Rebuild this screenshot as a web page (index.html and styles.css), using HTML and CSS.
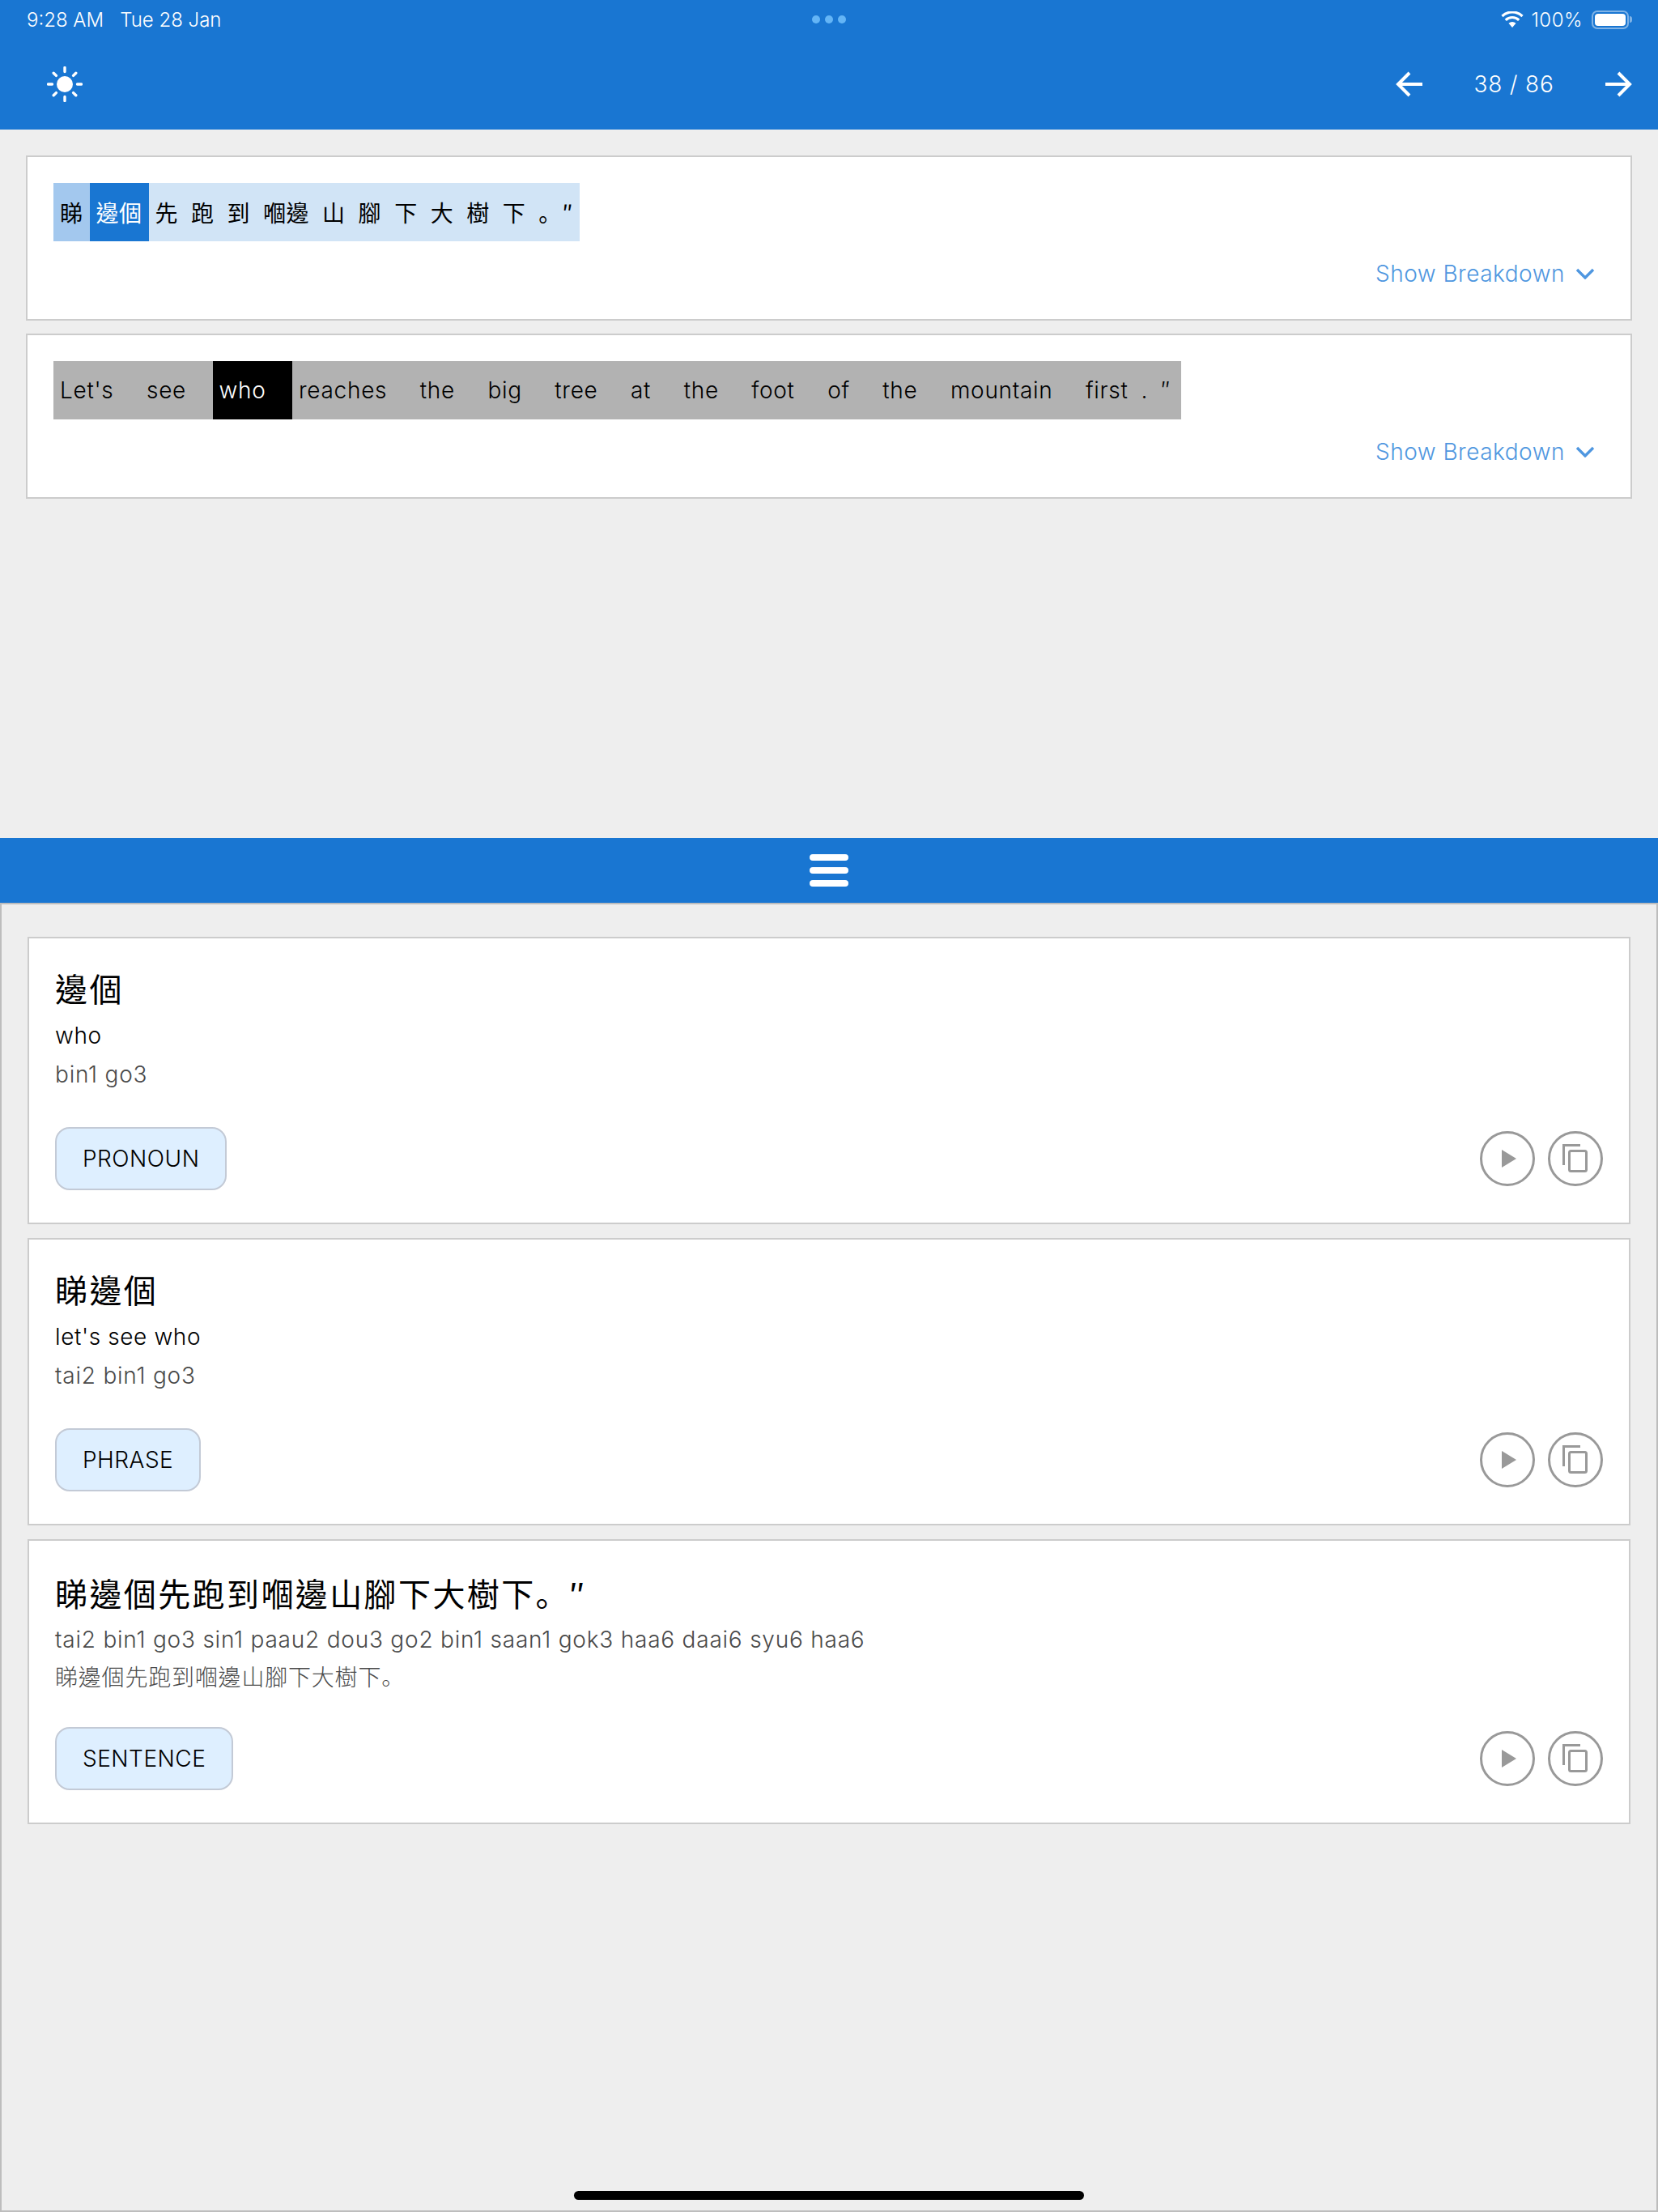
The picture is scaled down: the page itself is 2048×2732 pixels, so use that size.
FILE: index.html
```html
<!DOCTYPE html>
<html lang="zh-Hant">
<head>
<meta charset="utf-8">
<title>Reader</title>
<link rel="stylesheet" href="styles.css">
</head>
<body>
<header class="appbar">
  <div class="status">
    <div class="status-left"><span>9:28 AM</span><span>Tue 28 Jan</span></div>
    <div class="status-dots"><i></i><i></i><i></i></div>
    <div class="status-right">
      <svg class="wifi" viewBox="0 0 28 20"><path d="M14 20l-4.500-5.200a6.500 6.500 0 0 1 9 0z" fill="#fff"/><path d="M5.800 10.800a11.800 11.800 0 0 1 16.400 0M1.500 6a18 18 0 0 1 25 0" fill="none" stroke="#fff" stroke-width="3.200"/></svg>
      <span class="percent">100%</span>
      <span class="battery"><span class="battery-fill"></span></span>
      <span class="battery-nub"></span>
    </div>
  </div>
  <div class="toolbar">
    <svg class="sun" viewBox="0 0 44 44"><circle cx="22" cy="22" r="10" fill="#fff"/><path d="M22 1.500v5M22 37.500v5M1.500 22h5M37.500 22h5M8.200 8.200l3.200 3.200M35.800 8.200l-3.200 3.200M8.200 35.800l3.200-3.200M35.800 35.800l-3.200-3.200" stroke="#fff" stroke-width="3.400" stroke-linecap="round"/></svg>
    <div class="pager">
      <svg class="arrow" viewBox="0 0 34 32"><path d="M33 16H3M17 2L3 16l14 14" fill="none" stroke="#fff" stroke-width="4"/></svg>
      <span class="count">38 / 86</span>
      <svg class="arrow" viewBox="0 0 34 32"><path d="M1 16h30M17 2l14 14-14 14" fill="none" stroke="#fff" stroke-width="4"/></svg>
    </div>
  </div>
</header>

<section class="top">
  <article class="line-card">
    <div class="tokens cjk">
      <span class="tok cn-near">睇</span><span class="tok cn-on">邊個</span><span class="tok cn">先</span><span class="tok cn">跑</span><span class="tok cn">到</span><span class="tok cn">嗰邊</span><span class="tok cn">山</span><span class="tok cn">腳</span><span class="tok cn">下</span><span class="tok cn">大</span><span class="tok cn">樹</span><span class="tok cn">下</span><span class="tok cn stop chip-stop" lang="zh-Hans">。</span><span class="tok cn">″</span>
    </div>
    <div class="breakdown"><span>Show Breakdown</span><svg viewBox="0 0 24 14"><path d="M2 2l10 10L22 2" fill="none" stroke="#4f97e0" stroke-width="3.400"/></svg></div>
  </article>
  <article class="line-card">
    <div class="tokens en">
      <span class="tok word">Let's</span><span class="tok word">see</span><span class="tok word on">who</span><span class="tok word">reaches</span><span class="tok word">the</span><span class="tok word">big</span><span class="tok word">tree</span><span class="tok word">at</span><span class="tok word">the</span><span class="tok word">foot</span><span class="tok word">of</span><span class="tok word">the</span><span class="tok word">mountain</span><span class="tok">first</span><span class="tok">.</span><span class="tok tail">″</span>
    </div>
    <div class="breakdown"><span>Show Breakdown</span><svg viewBox="0 0 24 14"><path d="M2 2l10 10L22 2" fill="none" stroke="#4f97e0" stroke-width="3.400"/></svg></div>
  </article>
</section>

<div class="divider">
  <svg viewBox="0 0 48 40"><path d="M4 4h40M4 20h40M4 36h40" stroke="#fff" stroke-width="8" stroke-linecap="round"/></svg>
</div>

<section class="panel">
  <article class="entry">
    <h2 class="head">邊個</h2>
    <p class="gloss">who</p>
    <p class="sub">bin1 go3</p>
    <div class="foot">
      <span class="tag">PRONOUN</span>
      <div class="actions">
        <span class="act"><svg viewBox="0 0 68 68"><path d="M27 23v22l18-11z" fill="#999"/></svg></span>
        <span class="act"><svg viewBox="0 0 68 68"><path d="M19.500 42V17.500H40" fill="none" stroke="#999" stroke-width="3"/><rect x="26.500" y="24.500" width="21" height="25" rx="2" fill="none" stroke="#999" stroke-width="3"/></svg></span>
      </div>
    </div>
  </article>
  <article class="entry">
    <h2 class="head">睇邊個</h2>
    <p class="gloss">let's see who</p>
    <p class="sub">tai2 bin1 go3</p>
    <div class="foot">
      <span class="tag">PHRASE</span>
      <div class="actions">
        <span class="act"><svg viewBox="0 0 68 68"><path d="M27 23v22l18-11z" fill="#999"/></svg></span>
        <span class="act"><svg viewBox="0 0 68 68"><path d="M19.500 42V17.500H40" fill="none" stroke="#999" stroke-width="3"/><rect x="26.500" y="24.500" width="21" height="25" rx="2" fill="none" stroke="#999" stroke-width="3"/></svg></span>
      </div>
    </div>
  </article>
  <article class="entry">
    <h2 class="head">睇邊個先跑到嗰邊山腳下大樹下<span class="stop" lang="zh-Hans">。</span>″</h2>
    <p class="sub sub-first">tai2 bin1 go3 sin1 paau2 dou3 go2 bin1 saan1 gok3 haa6 daai6 syu6 haa6</p>
    <p class="sub sub-cjk">睇邊個先跑到嗰邊山腳下大樹下<span class="stop" lang="zh-Hans">。</span></p>
    <div class="foot foot-tight">
      <span class="tag">SENTENCE</span>
      <div class="actions">
        <span class="act"><svg viewBox="0 0 68 68"><path d="M27 23v22l18-11z" fill="#999"/></svg></span>
        <span class="act"><svg viewBox="0 0 68 68"><path d="M19.500 42V17.500H40" fill="none" stroke="#999" stroke-width="3"/><rect x="26.500" y="24.500" width="21" height="25" rx="2" fill="none" stroke="#999" stroke-width="3"/></svg></span>
      </div>
    </div>
  </article>
  <div class="home-bar"></div>
</section>
</body>
</html>
```
FILE: styles.css
```css
* { box-sizing: border-box; }
html, body { margin: 0; padding: 0; }
body {
  width: 2048px;
  height: 2732px;
  display: flex;
  flex-direction: column;
  background: #eeeeee;
  color: #000;
  font-family: Inter, "Noto Sans CJK TC", sans-serif;
  font-weight: 350;
  overflow: hidden;
}
.appbar { background: #1976d2; color: #fff; height: 160px; flex: none; }
.status {
  height: 48px;
  padding: 0 32px 0 33px;
  display: flex;
  align-items: center;
  justify-content: space-between;
  position: relative;
  font-size: 24px;
}
.status-left { display: flex; gap: 20px; }
.status-dots { display: flex; gap: 6px; position: absolute; left: 1003px; top: 19px; }
.status-dots i { width: 10px; height: 10px; border-radius: 50%; background: #64b5f6; }
.status-right { display: flex; align-items: center; }
.percent { letter-spacing: .5px; }
.wifi { width: 28px; height: 20px; margin-right: 9px; }
.battery {
  width: 46px; height: 23px; margin-left: 11px;
  border: 2px solid rgba(255,255,255,.45);
  border-radius: 7px;
  padding: 2px;
  display: flex;
}
.battery-fill { flex: 1; background: #fff; border-radius: 4px; }
.battery-nub { width: 3px; height: 8px; background: rgba(255,255,255,.45); border-radius: 0 3px 3px 0; margin-left: 1px; }
.toolbar {
  height: 112px;
  padding: 0 32px 0 58px;
  display: flex;
  align-items: center;
  justify-content: space-between;
}
.sun { width: 44px; height: 44px; }
.pager { display: flex; align-items: center; }
.arrow { width: 34px; height: 32px; }
.count { font-size: 28px; letter-spacing: .8px; width: 224px; text-align: center; }

.top {
  height: 875px;
  flex: none;
  padding: 32px 32px 0;
  display: flex;
  flex-direction: column;
  gap: 16px;
}
.line-card {
  background: #fff;
  border: 2px solid #cccccc;
  height: 204px;
  padding: 32px;
}
.tokens { display: flex; height: 72px; align-items: center; width: max-content; font-size: 28px; }
.tok { display: flex; align-items: center; height: 72px; padding: 0 8px; }
.cjk { font-family: "Noto Sans CJK TC", sans-serif; font-weight: 400; letter-spacing: .5px; }
.cn { background: #d1e4f6; }
.cn-near { background: #a3c8ee; }
.cn-on { background: #1976d2; color: #fff; }
.stop { font-family: "Noto Sans CJK SC", sans-serif; }
.chip-stop { letter-spacing: -15px; }
.en { letter-spacing: .7px; }
.en .tok { background: #b2b2b2; }
.en .word { padding-right: 32.5px; }
.en .tail { padding-right: 13px; }
.en .on { background: #000; color: #fff; }
.breakdown {
  margin-top: 16px;
  height: 48px;
  display: flex;
  align-items: center;
  justify-content: flex-end;
  gap: 13px;
  padding-right: 12px;
  color: #4f97e0;
  font-size: 28px;
  letter-spacing: .5px;
}
.breakdown svg { width: 24px; height: 14px; }

.divider {
  height: 80px;
  flex: none;
  background: #1976d2;
  display: flex;
  align-items: center;
  justify-content: center;
}
.divider svg { width: 48px; height: 40px; }

.panel {
  flex: 1;
  position: relative;
  border: 2px solid #bdbdbd;
  background: #eeeeee;
  padding: 40px 32px 0;
  display: flex;
  flex-direction: column;
  gap: 17px;
}
.entry {
  background: #fff;
  border: 2px solid #cccccc;
  padding: 32px 32px 40px;
}
.head { margin: 0; font-size: 40px; font-weight: 400; letter-spacing: 2.4px; line-height: 64px; }
.gloss { margin: 0; font-size: 28px; letter-spacing: .6px; line-height: 48px; }
.sub { margin: 0; font-size: 28px; letter-spacing: .78px; line-height: 48px; color: #4a4a4a; }
.sub-first { line-height: 46px; }
.sub-cjk { font-weight: 300; letter-spacing: .8px; line-height: 44px; }
.foot { margin-top: 41px; display: flex; align-items: center; justify-content: space-between; }
.foot-tight { margin-top: 39px; }
.tag {
  height: 78px;
  padding: 0 32px;
  display: flex;
  align-items: center;
  background: #deefff;
  border: 2px solid #c3cad6;
  border-radius: 18px;
  font-size: 28px;
  letter-spacing: .5px;
}
.actions { display: flex; gap: 16px; }
.act { width: 68px; height: 68px; border: 3px solid #999; border-radius: 50%; position: relative; }
.act svg { position: absolute; left: -3px; top: -3px; width: 68px; height: 68px; }
.home-bar {
  position: absolute;
  left: 707px;
  top: 1589px;
  width: 630px;
  height: 11px;
  border-radius: 6px;
  background: #000;
}
```
